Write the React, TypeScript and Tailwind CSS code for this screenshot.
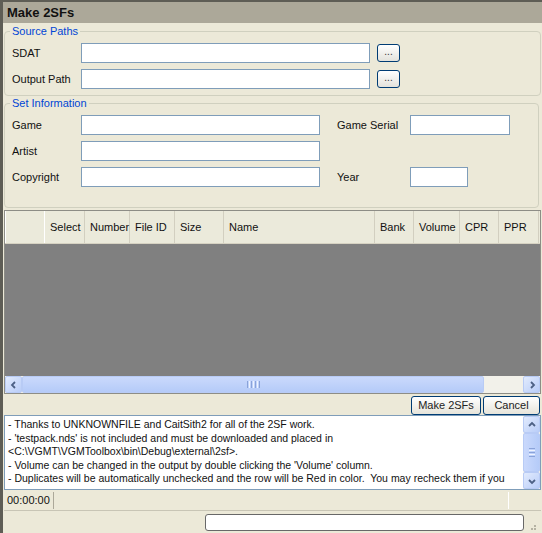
import React from 'react';

const font = { fontFamily: '"Liberation Sans", Arial, sans-serif' };

function TextBox({ className }: { className: string }) {
  return <div className={`h-[20px] bg-white border border-[#7f9db9] ${className}`} />;
}

function BrowseButton() {
  return (
    <div className="ml-[7px] w-[23px] h-[18px] rounded-[3px] border border-[#003c74] bg-gradient-to-b from-white to-[#e3e2dc] flex items-center justify-center text-[10px] leading-none text-[#333]">
      <span className="-mt-[2px]">...</span>
    </div>
  );
}

function XpButton({ label, className }: { label: string; className: string }) {
  return (
    <div
      className={`h-[19px] rounded-[3px] border border-[#003c74] bg-gradient-to-b from-white to-[#e6e4da] flex items-center justify-center text-[11px] text-[#222] ${className}`}
    >
      {label}
    </div>
  );
}

function Arrow({ dir }: { dir: 'left' | 'right' | 'up' | 'down' }) {
  const d = {
    left: 'M6 2 L3 5 L6 8',
    right: 'M4 2 L7 5 L4 8',
    up: 'M2 6 L5 3 L8 6',
    down: 'M2 4 L5 7 L8 4',
  }[dir];
  return (
    <div className="w-[17px] h-[17px] shrink-0 rounded-[2px] border border-[#b8cbf5] bg-gradient-to-br from-[#e2ebfd] to-[#b9cdf8] flex items-center justify-center">
      <svg width="10" height="10" viewBox="0 0 10 10">
        <path d={d} fill="none" stroke="#4d6185" strokeWidth="1.8" />
      </svg>
    </div>
  );
}

const columns = [
  { name: 'Select', w: 40 },
  { name: 'Number', w: 45 },
  { name: 'File ID', w: 45 },
  { name: 'Size', w: 49 },
  { name: 'Name', w: 151 },
  { name: 'Bank', w: 39 },
  { name: 'Volume', w: 46 },
  { name: 'CPR', w: 39 },
  { name: 'PPR', w: 40 },
];

const notes = [
  '- Thanks to UNKNOWNFILE and CaitSith2 for all of the 2SF work.',
  "- 'testpack.nds' is not included and must be downloaded and placed in",
  '<C:\\VGMT\\VGMToolbox\\bin\\Debug\\external\\2sf>.',
  "- Volume can be changed in the output by double clicking the 'Volume' column.",
  '- Duplicates will be automatically unchecked and the row will be Red in color.  You may recheck them if you',
];

export default function App() {
  return (
    <div
      style={font}
      className="w-[542px] h-[533px] overflow-hidden bg-[#ece9d8] border-t-2 border-l-[3px] border-[#5e5d55] flex flex-col text-[11px] text-[#111]"
    >
      <div className="h-[21px] shrink-0 bg-[#aca899] pl-[4px] flex items-center text-[13px] font-bold text-[#111]">
        Make 2SFs
      </div>

      <div className="flex flex-col pl-[1px] pr-[1px]">
        <fieldset className="mt-[1px] h-[72px] border border-[#d0d0bf] rounded-[4px] pl-[7px] pr-0">
          <legend className="px-[2px] -ml-[2px] leading-[15px] text-[#0046d5]">Source Paths</legend>
          <div className="mt-[4px] flex items-center">
            <span className="w-[69px]">SDAT</span>
            <TextBox className="w-[289px]" />
            <BrowseButton />
          </div>
          <div className="mt-[6px] flex items-center">
            <span className="w-[69px]">Output Path</span>
            <TextBox className="w-[289px]" />
            <BrowseButton />
          </div>
        </fieldset>

        <fieldset className="h-[112px] border border-[#d0d0bf] rounded-[4px] pl-[7px] pr-0 mr-[2px]">
          <legend className="px-[2px] -ml-[2px] leading-[15px] text-[#0046d5]">Set Information</legend>
          <div className="mt-[4px] flex items-center">
            <span className="w-[69px]">Game</span>
            <TextBox className="w-[239px]" />
            <span className="ml-[17px] w-[73px]">Game Serial</span>
            <TextBox className="w-[100px]" />
          </div>
          <div className="mt-[6px] flex items-center">
            <span className="w-[69px]">Artist</span>
            <TextBox className="w-[239px]" />
          </div>
          <div className="mt-[6px] flex items-center">
            <span className="w-[69px]">Copyright</span>
            <TextBox className="w-[239px]" />
            <span className="ml-[17px] w-[73px]">Year</span>
            <TextBox className="w-[58px]" />
          </div>
        </fieldset>

        <div className="mt-[2px] h-[184px] border border-[#8d8d86] flex flex-col">
          <div className="h-[33px] shrink-0 flex bg-[#ebeadb] border-b border-[#d6d2c2]">
            <div className="w-[40px] border-r border-[#d2cfc0] border-l border-white" />
            {columns.map((c) => (
              <div
                key={c.name}
                style={{ width: c.w }}
                className="shrink-0 border-r border-[#d2cfc0] flex items-center pl-[5px] text-[#111]"
              >
                {c.name}
              </div>
            ))}
          </div>
          <div className="flex-1 bg-[#808080]" />
          <div className="h-[17px] shrink-0 flex bg-[#f2f1ea]">
            <Arrow dir="left" />
            <div className="w-[462px] h-[17px] rounded-[2px] border border-[#b8cbf5] bg-gradient-to-b from-[#cad9fc] to-[#b5cbf8] flex items-center justify-center gap-[1px]">
              <div className="w-[1px] h-[7px] bg-[#8aa3d9]" />
              <div className="w-[1px] h-[7px] bg-[#eef3fe]" />
              <div className="w-[1px] h-[7px] bg-[#8aa3d9]" />
              <div className="w-[1px] h-[7px] bg-[#eef3fe]" />
              <div className="w-[1px] h-[7px] bg-[#8aa3d9]" />
              <div className="w-[1px] h-[7px] bg-[#eef3fe]" />
              <div className="w-[1px] h-[7px] bg-[#8aa3d9]" />
            </div>
            <div className="flex-1" />
            <Arrow dir="right" />
          </div>
        </div>

        <div className="h-[21px] flex items-center justify-end gap-[2px] pt-[1px] pr-[1px]">
          <XpButton label="Make 2SFs" className="w-[70px]" />
          <XpButton label="Cancel" className="w-[57px]" />
        </div>

        <div className="h-[75px] bg-white border border-[#7f9db9] flex">
          <div className="flex-1 pl-[3px] pt-[2px] leading-[13.5px] text-[10.5px] text-[#111] whitespace-pre overflow-hidden">
            {notes.map((n) => (
              <div key={n}>{n}</div>
            ))}
          </div>
          <div className="w-[17px] flex flex-col bg-[#f4f3ee]">
            <Arrow dir="up" />
            <div className="flex-1 rounded-[2px] border border-[#b8cbf5] bg-gradient-to-r from-[#cad9fc] to-[#b5cbf8] flex items-center justify-center">
              <div className="flex flex-col gap-[1px]">
                <div className="w-[6px] h-[1px] bg-[#8aa3d9]" />
                <div className="w-[6px] h-[1px] bg-[#eef3fe]" />
                <div className="w-[6px] h-[1px] bg-[#8aa3d9]" />
                <div className="w-[6px] h-[1px] bg-[#eef3fe]" />
                <div className="w-[6px] h-[1px] bg-[#8aa3d9]" />
              </div>
            </div>
            <Arrow dir="down" />
          </div>
        </div>

        <div className="h-[21px] flex items-center border-b border-[#c8c5b5]">
          <div className="w-[50px] pl-[3px] border-r border-[#aca899] h-[17px] flex items-center">00:00:00</div>
          <div className="w-[455px] h-[17px] border-r border-white" />
        </div>

        <div className="h-[23px] flex items-center">
          <div className="ml-[201px] w-[319px] h-[17px] rounded-[3px] border border-[#686868] bg-white" />
          <div className="ml-[4px] mt-[10px] grid grid-cols-3 gap-[1px]">
            <div className="w-[2px] h-[2px]" />
            <div className="w-[2px] h-[2px]" />
            <div className="w-[2px] h-[2px] bg-[#b5b2a3]" />
            <div className="w-[2px] h-[2px]" />
            <div className="w-[2px] h-[2px] bg-[#b5b2a3]" />
            <div className="w-[2px] h-[2px] bg-[#b5b2a3]" />
          </div>
        </div>
      </div>
    </div>
  );
}
